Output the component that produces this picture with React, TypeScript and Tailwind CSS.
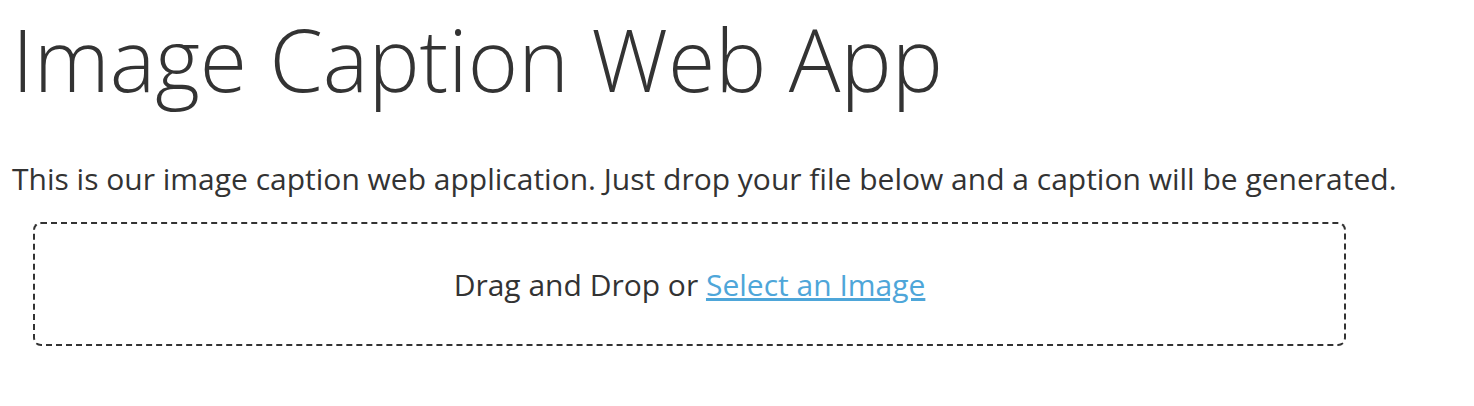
export default function App() {
  return (
    <div className="bg-white min-h-[406px] px-[12px] text-[#333333]" style={{ fontFamily: '"Open Sans", sans-serif' }}>
      <h1 className="text-[86px] font-light leading-none pt-[16px] pb-0">Image Caption Web App</h1>
      <p className="text-[30px] leading-[40px] mt-[57px]">This is our image caption web application. Just drop your file below and a caption will be generated.</p>
      <div className="ml-[21px] w-[1313px] h-[124px] mt-[23px] border-2 border-dashed border-[#333333] rounded-[8px] flex items-center justify-center">
        <span className="text-[30px]">
          Drag and Drop or{" "}
          <a href="#" className="text-[#4ea6d9] underline">Select an Image</a>
        </span>
      </div>
    </div>
  );
}
